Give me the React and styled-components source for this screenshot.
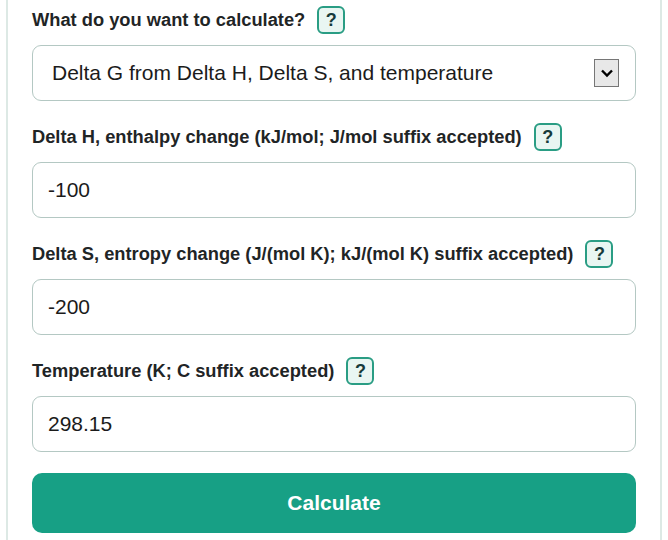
import React, { useState } from "react";
import styled, { createGlobalStyle } from "styled-components";

const GlobalStyle = createGlobalStyle`
  html, body {
    margin: 0;
    padding: 0;
    background: #ffffff;
    font-family: "Liberation Sans", Arial, sans-serif;
  }
  * {
    box-sizing: border-box;
  }
`;

const Card = styled.div`
  margin-left: 6px;
  width: 656px;
  height: 540px;
  border-left: 2px solid #dde9e5;
  border-right: 2px solid #dde9e5;
  padding: 5px 24px 0 24px;
  background: #ffffff;
`;

const Group = styled.div`
  display: flex;
  flex-direction: column;
  gap: 10px;
  margin-bottom: 21px;
`;

const LabelRow = styled.div`
  display: flex;
  align-items: center;
  gap: 12px;
  height: 30px;
`;

const Label = styled.label`
  font-size: 18.3px;
  font-weight: bold;
  color: #1f2526;
`;

const HelpButton = styled.button`
  width: 28px;
  height: 28px;
  padding: 0;
  border: 2px solid #2a9d84;
  border-radius: 6px;
  background: #e9f6f2;
  color: #163b3b;
  font-family: "Liberation Sans", Arial, sans-serif;
  font-size: 18px;
  font-weight: bold;
  display: flex;
  align-items: center;
  justify-content: center;
  cursor: pointer;
`;

const SelectBox = styled.div`
  height: 56px;
  border: 1px solid #b4c8c3;
  border-radius: 9px;
  display: flex;
  align-items: center;
  justify-content: space-between;
  padding: 0 16px 0 19px;
  font-size: 21px;
  color: #1b1b1b;
  background: #ffffff;
`;

const ArrowBox = styled.span`
  width: 25px;
  height: 28px;
  border: 1px solid #767676;
  background: #e8e8e8;
  display: flex;
  align-items: center;
  justify-content: center;
`;

const Input = styled.input`
  height: 56px;
  width: 100%;
  border: 1px solid #b4c8c3;
  border-radius: 9px;
  padding: 0 15px;
  font-family: "Liberation Sans", Arial, sans-serif;
  font-size: 21px;
  color: #1b1b1b;
  background: #ffffff;
  outline: none;
`;

const CalcButton = styled.button`
  width: 100%;
  height: 60px;
  border: none;
  border-radius: 10px;
  background: #17a085;
  color: #ffffff;
  font-family: "Liberation Sans", Arial, sans-serif;
  font-size: 21px;
  font-weight: bold;
  cursor: pointer;
`;

const Chevron = () => (
  <svg width="14" height="10" viewBox="0 0 14 10">
    <path d="M2 2.5 L7 7.5 L12 2.5" fill="none" stroke="#000" strokeWidth="2.4" />
  </svg>
);

const fields = [
  { key: "dh", label: "Delta H, enthalpy change (kJ/mol; J/mol suffix accepted)", value: "-100" },
  { key: "ds", label: "Delta S, entropy change (J/(mol K); kJ/(mol K) suffix accepted)", value: "-200" },
  { key: "t", label: "Temperature (K; C suffix accepted)", value: "298.15" },
];

const App = () => {
  const [values, setValues] = useState(
    Object.fromEntries(fields.map((f) => [f.key, f.value]))
  );

  return (
    <>
      <GlobalStyle />
      <Card>
        <Group>
          <LabelRow>
            <Label>What do you want to calculate?</Label>
            <HelpButton>?</HelpButton>
          </LabelRow>
          <SelectBox>
            <span>Delta G from Delta H, Delta S, and temperature</span>
            <ArrowBox>
              <Chevron />
            </ArrowBox>
          </SelectBox>
        </Group>
        {fields.map((f) => (
          <Group key={f.key}>
            <LabelRow>
              <Label>{f.label}</Label>
              <HelpButton>?</HelpButton>
            </LabelRow>
            <Input
              value={values[f.key]}
              onChange={(e) => setValues({ ...values, [f.key]: e.target.value })}
            />
          </Group>
        ))}
        <CalcButton>Calculate</CalcButton>
      </Card>
    </>
  );
};

export default App;
